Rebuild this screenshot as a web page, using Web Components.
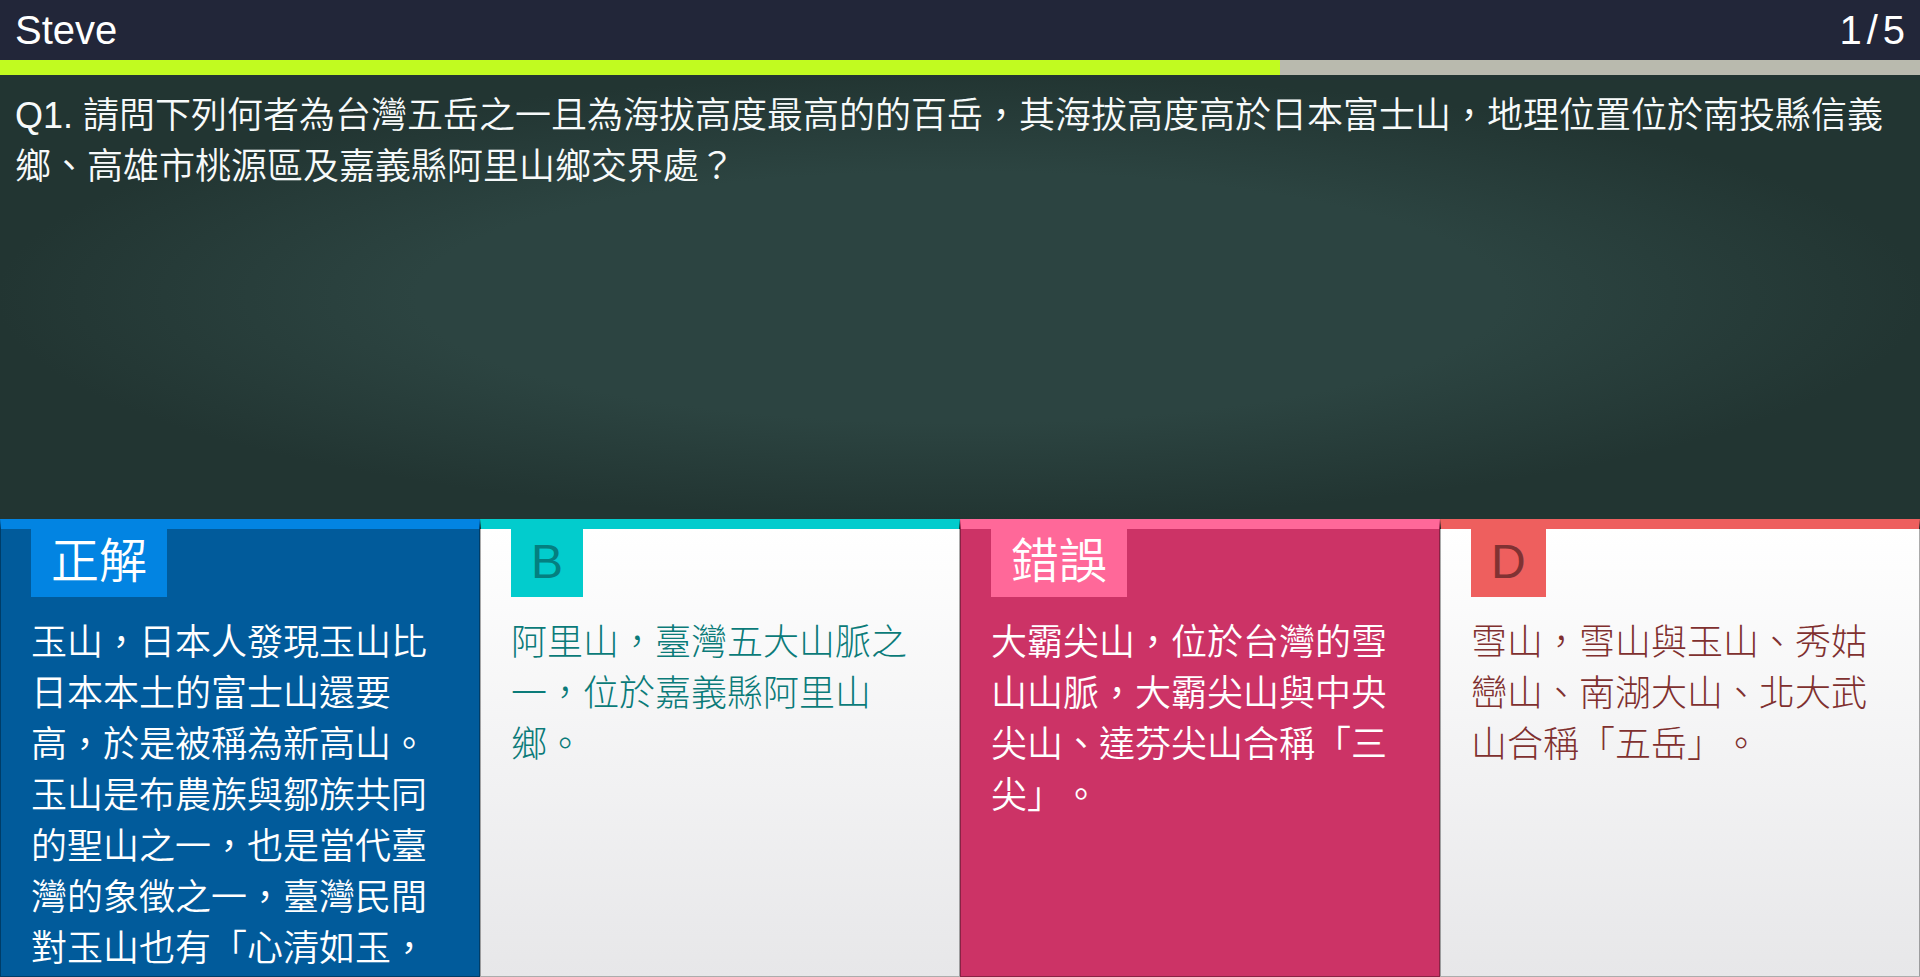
<!DOCTYPE html>
<html lang="zh-Hant-TW">
<head>
<meta charset="utf-8">
<meta name="viewport" content="width=device-width, initial-scale=1">
<title>Quiz</title>
<style>
  html, body { height: 100%; margin: 0; }
  body {
    font-family: "Liberation Sans", "Noto Sans CJK TC", sans-serif;
    color: #fff;
    background: #233634;
    text-spacing-trim: space-all;
  }
</style>
</head>
<body>
<quiz-app>
  <quiz-header slot="header" player="Steve" current="1" total="5"></quiz-header>
  <quiz-timer slot="timer" value="2" max="3"></quiz-timer>
  <quiz-question slot="question">Q1. 請問下列何者為台灣五岳之一且為海拔高度最高的的百岳，其海拔高度高於日本富士山，地理位置位於南投縣信義鄉、高雄市桃源區及嘉義縣阿里山鄉交界處？</quiz-question>
  <quiz-answer tone="blue" label="正解">玉山，日本人發現玉山比日本本土的富士山還要高，於是被稱為新高山。玉山是布農族與鄒族共同的聖山之一，也是當代臺灣的象徵之一，臺灣民間對玉山也有「心清如玉，</quiz-answer>
  <quiz-answer tone="teal" label="B">阿里山，臺灣五大山脈之一，位於嘉義縣阿里山鄉。</quiz-answer>
  <quiz-answer tone="pink" label="錯誤">大霸尖山，位於台灣的雪山山脈，大霸尖山與中央尖山、達芬尖山合稱「三尖」。</quiz-answer>
  <quiz-answer tone="red" label="D">雪山，雪山與玉山、秀姑巒山、南湖大山、北大武山合稱「五岳」。</quiz-answer>
</quiz-app>

<script>
  class ShadowElement extends HTMLElement {
    constructor() {
      super();
      this.attachShadow({ mode: 'open' });
    }
    connectedCallback() {
      this.shadowRoot.innerHTML = this.render();
    }
  }

  customElements.define('quiz-app', class extends ShadowElement {
    render() {
      return `
        <style>
          :host { display: grid; height: 100vh; grid-template-rows: auto auto minmax(0, 222fr) minmax(0, 229fr); }
          .answers { display: grid; grid-template-columns: repeat(4, minmax(0, 1fr)); min-height: 0; }
        </style>
        <slot name="header"></slot>
        <slot name="timer"></slot>
        <slot name="question"></slot>
        <main class="answers"><slot></slot></main>`;
    }
  });

  customElements.define('quiz-header', class extends ShadowElement {
    render() {
      return `
        <style>
          :host { display: block; background: #222639; }
          header { display: flex; justify-content: space-between; padding: 0 15px; font-size: 40px; line-height: 60px; }
          .count { display: flex; gap: 5px; }
        </style>
        <header>
          <span>${this.getAttribute('player')}</span>
          <span class="count"><span>${this.getAttribute('current')}</span><span>/</span><span>${this.getAttribute('total')}</span></span>
        </header>`;
    }
  });

  customElements.define('quiz-timer', class extends ShadowElement {
    render() {
      return `
        <style>
          :host { display: block; height: 15px; }
          progress { display: block; width: 100%; height: 100%; appearance: none; border: 0; background: #b9baae; }
          progress::-webkit-progress-bar { background: #b9baae; }
          progress::-webkit-progress-value { background: #c1fb20; }
          progress::-moz-progress-bar { background: #c1fb20; }
        </style>
        <progress aria-label="剩餘時間" value="${this.getAttribute('value')}" max="${this.getAttribute('max')}"></progress>`;
    }
  });

  customElements.define('quiz-question', class extends ShadowElement {
    render() {
      return `
        <style>
          :host {
            display: block; box-sizing: border-box; padding: 15px; overflow: hidden;
            background: radial-gradient(ellipse, #2c4441 40%, #223532 71%);
          }
          p { margin: 0; font-size: 36px; font-weight: 350; line-height: 51px; color: #f7fafa; }
        </style>
        <p><slot></slot></p>`;
    }
  });

  customElements.define('quiz-answer', class extends ShadowElement {
    render() {
      return `
        <style>
          :host { display: block; min-width: 0; min-height: 0; --edge: rgba(0, 0, 0, 0.32); --weight: 300; }
          :host([tone="blue"]) { --accent: #0284e2; --fill: #015b9b; --badge: #fff; --ink: #fff; --weight: 350; }
          :host([tone="teal"]) { --accent: #02cccd; --fill: linear-gradient(#fff, #e7e7e9); --badge: #047f80; --ink: #0b7b79; }
          :host([tone="pink"]) { --accent: #ff6899; --fill: #cc3366; --badge: #fff; --ink: #fff; --weight: 350; }
          :host([tone="red"]) { --accent: #ee5f5e; --fill: linear-gradient(#fff, #e7e7e9); --badge: #803233; --ink: #80302f; }
          button {
            display: flex; flex-direction: column; align-items: flex-start; justify-content: flex-start;
            box-sizing: border-box; width: 100%; height: 100%; margin: 0; padding: 0 30px; overflow: hidden;
            border: 1px solid var(--edge); border-top: 10px solid var(--accent); border-radius: 0;
            background: var(--fill); color: var(--ink); font: inherit; font-weight: var(--weight); text-align: left; cursor: pointer;
          }
          .badge { flex: none; padding: 0 20px 2px; font-size: 48px; line-height: 66px; background: var(--accent); color: var(--badge); }
          .text { flex: none; margin-top: 20px; font-size: 36px; line-height: 51px; }
        </style>
        <button type="button">
          <span class="badge">${this.getAttribute('label')}</span>
          <span class="text"><slot></slot></span>
        </button>`;
    }
  });
</script>
</body>
</html>
